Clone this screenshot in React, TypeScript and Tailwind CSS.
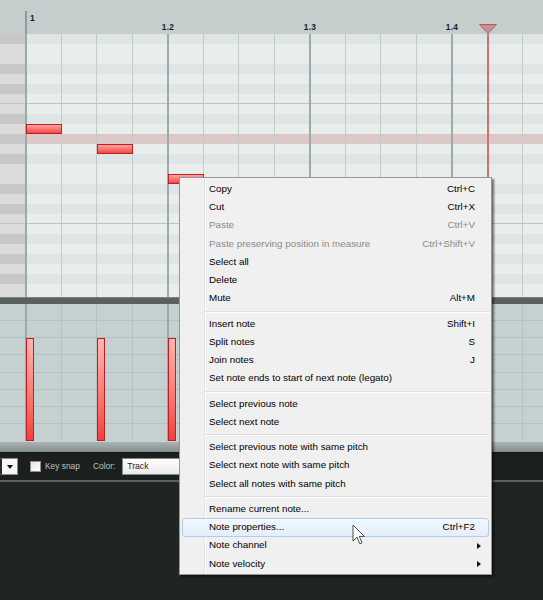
import React from "react";

const ROW_H = 10;
const BEAT = 142;
const SUB = BEAT / 4;

// pitch rows from the top of the note grid downwards
const ROWS = ["F#", "F", "E", "D#", "D", "C#", "C", "B", "A#", "A", "G#", "G", "F#", "F", "E", "D#", "D", "C#", "C", "B", "A#", "A", "G#", "G", "F#", "F", "E"];
const HOVER_ROW = 10;

const NOTES = [
    { row: 9, x: 0 },
    { row: 11, x: SUB * 2 },
    { row: 14, x: SUB * 4 },
];

const CELLS = Array.from({ length: 15 }, (_, k) => k % 4 === 0);

type MenuEntry = { label: string; shortcut?: string; disabled?: boolean; sub?: boolean; active?: boolean } | "sep";

const MENU: MenuEntry[] = [
    { label: "Copy", shortcut: "Ctrl+C" },
    { label: "Cut", shortcut: "Ctrl+X" },
    { label: "Paste", shortcut: "Ctrl+V", disabled: true },
    { label: "Paste preserving position in measure", shortcut: "Ctrl+Shift+V", disabled: true },
    { label: "Select all" },
    { label: "Delete" },
    { label: "Mute", shortcut: "Alt+M" },
    "sep",
    { label: "Insert note", shortcut: "Shift+I" },
    { label: "Split notes", shortcut: "S" },
    { label: "Join notes", shortcut: "J" },
    { label: "Set note ends to start of next note (legato)" },
    "sep",
    { label: "Select previous note" },
    { label: "Select next note" },
    "sep",
    { label: "Select previous note with same pitch" },
    { label: "Select next note with same pitch" },
    { label: "Select all notes with same pitch" },
    "sep",
    { label: "Rename current note..." },
    { label: "Note properties...", shortcut: "Ctrl+F2", active: true },
    { label: "Note channel", sub: true },
    { label: "Note velocity", sub: true },
];

function BeatLines({ beat, sub }: { beat: string; sub: string }) {
    return (
        <div className="pointer-events-none absolute inset-y-0 left-[-1px] right-0 flex">
            {CELLS.map((isBeat, i) => (
                <div key={i} className={`h-full w-[35.5px] shrink-0 ${isBeat ? `border-l-2 ${beat}` : `border-l ${sub}`}`} />
            ))}
        </div>
    );
}

function ContextMenu() {
    return (
        <div className="absolute left-[179px] top-[177px] w-[313px] border border-[#979797] bg-[#f0f0f0] pt-[2px] pb-[1px] shadow-[2px_2px_2px_rgba(0,0,0,0.55)] text-[9.8px] text-black">
            <div className="absolute top-0 bottom-0 left-[24px] w-[2px] border-l border-[#e2e3e3] bg-white" />
            {MENU.map((item, i) =>
                item === "sep" ? (
                    <div key={i} className="relative h-[7px] pl-[25px] pr-[1px] pt-[3px]">
                        <div className="h-[2px] border-t border-[#e0e0e0] bg-white" />
                    </div>
                ) : (
                    <div key={i} className="relative flex h-[18.25px] items-center pl-[29px] pr-[16px]">
                        {item.active && (
                            <div className="absolute inset-y-0 left-[2px] right-[2px] rounded-[3px] border border-[#aecdef] bg-gradient-to-b from-[#f3f8fd] to-[#e4eef9]" />
                        )}
                        <span className={`relative flex-1 whitespace-nowrap ${item.disabled ? "text-[#8a8a8a]" : ""}`}>{item.label}</span>
                        {item.shortcut && (
                            <span className={`relative whitespace-nowrap ${item.disabled ? "text-[#8a8a8a]" : ""}`}>{item.shortcut}</span>
                        )}
                        {item.sub && (
                            <svg className="relative mr-[-6px]" width="4" height="6" viewBox="0 0 4 6">
                                <polygon points="0,0 4,3 0,6" fill="#111" />
                            </svg>
                        )}
                    </div>
                )
            )}
        </div>
    );
}

export default function App() {
    return (
        <div className="relative h-[600px] w-[543px] overflow-hidden bg-[#1f2523] font-['Liberation_Sans',Arial,sans-serif]">
            {/* ruler */}
            <div className="flex h-[34px] bg-[#c3cecd]">
                <div className="w-[26px] shrink-0" />
                <div className="relative flex-1">
                    <div className="absolute left-[-1px] top-[11px] bottom-0 w-[2px] bg-[#8c9d9b]" />
                    <span className="absolute left-[4px] top-[12px] text-[8.5px] font-bold text-[#1b1b1b]">1</span>
                    {[1, 2, 3].map(b => (
                        <span
                            key={b}
                            className="absolute top-[21px] -translate-x-1/2 text-[8.3px] font-bold tracking-[0.4px] text-[#1b1b1b]"
                            style={{ left: b * BEAT }}
                        >
                            1.{b + 1}
                        </span>
                    ))}
                    <svg className="absolute left-[452.5px] top-[24px]" width="18" height="10" viewBox="0 0 18 10">
                        <polygon points="0.5,0.5 17.5,0.5 9,9.5" fill="#c89393" stroke="#b45a5a" strokeWidth="1" />
                    </svg>
                </div>
            </div>

            {/* note grid */}
            <div className="flex h-[263px] overflow-hidden">
                <div className="flex w-[26px] shrink-0 flex-col">
                    {ROWS.map((n, i) => (
                        <div
                            key={i}
                            className={`h-[10px] shrink-0 ${n.includes("#") ? "bg-[#c8c8c8]" : "bg-[#dbdbdb]"} ${n === "C" ? "border-b border-[#c4c4c4]" : ""}`}
                        />
                    ))}
                </div>
                <div className="relative flex-1">
                    <div className="flex flex-col">
                        {ROWS.map((n, i) => (
                            <div
                                key={i}
                                className={`h-[10px] shrink-0 ${i === HOVER_ROW ? "bg-[#dbc9c9]" : n.includes("#") ? "bg-[#dfe5e4]" : "bg-[#e9eeed]"} ${n === "C" ? "border-b border-[#bac6c4]" : ""}`}
                            />
                        ))}
                    </div>
                    <BeatLines beat="border-[#9aaba9]" sub="border-[#c2cdcb]" />
                    {/* playhead */}
                    <div className="absolute inset-y-0 left-[461px] w-[2px] bg-[#d46f6f]" />
                    {NOTES.map((n, i) => (
                        <div
                            key={i}
                            className="absolute h-[10px] w-[36px] border border-[#bf1f1f] bg-gradient-to-b from-[#ffa0a0] to-[#f04545]"
                            style={{ top: n.row * ROW_H, left: n.x }}
                        />
                    ))}
                </div>
            </div>

            <div className="h-[7px] border-t border-[#7b8382] bg-[#5b6160]" />

            {/* velocity lane */}
            <div className="relative h-[137px] bg-[#c5d1d0]">
                <div className="flex flex-col">
                    {[0, 1, 2, 3, 4, 5, 6].map(k => (
                        <div key={k} className="h-[17.15px] shrink-0 border-b border-[#b2c0be]" />
                    ))}
                </div>
                <div className="absolute inset-y-0 left-[26px] right-0">
                    <BeatLines beat="border-[#98a9a7]" sub="border-[#b4c2c0]" />
                    {NOTES.map((n, i) => (
                        <div
                            key={i}
                            className="absolute bottom-0 top-[34px] w-[8px] border border-[#bf1f1f] bg-gradient-to-b from-[#ffb4b4] to-[#f23d3d]"
                            style={{ left: n.x }}
                        />
                    ))}
                </div>
            </div>
            <div className="h-[11px] border-t border-[#c9d2d1] bg-gradient-to-b from-[#aab4b3] to-[#848e8d]" />

            {/* toolbar */}
            <div className="flex h-[28px] items-center border-t border-[#111514] bg-[#1b201f] text-[8.4px] text-[#b7c1bf]">
                <div className="flex h-[17px] w-[18px] items-center justify-center border-y border-r border-l-2 border-[#8b8b8b] border-l-[#2a2a2a] bg-[#f7f7f7]">
                    <svg width="6" height="4" viewBox="0 0 6 4">
                        <polygon points="0,0 6,0 3,4" fill="#111" />
                    </svg>
                </div>
                <div className="ml-[12px] h-[11px] w-[11px] border border-[#8e8f8f] bg-gradient-to-br from-[#e4e4e4] to-white" />
                <span className="ml-[4px]">Key snap</span>
                <span className="ml-[13px]">Color:</span>
                <div className="ml-[7px] flex h-[17px] w-[120px] items-center border border-[#7f8b8a] bg-gradient-to-b from-white to-[#eaeaea] pl-[4px] text-[8.6px] text-[#1e1e1e]">
                    Track
                </div>
            </div>
            <div className="h-[2px] bg-[#59605f]" />

            <ContextMenu />

            {/* mouse pointer */}
            <svg className="absolute left-[352px] top-[524px]" width="14" height="22" viewBox="0 0 14 22">
                <path d="M1 1 L1 17 L5 13.2 L7.8 19.8 L10 18.8 L7.3 12.4 L12.4 12.4 Z" fill="white" stroke="#4a4a4a" strokeWidth="1" strokeLinejoin="round" />
            </svg>
        </div>
    );
}
